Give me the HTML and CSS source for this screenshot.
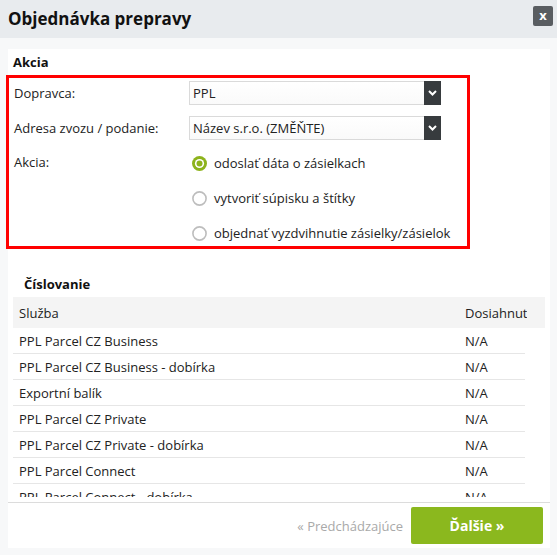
FILE: index.html
```html
<!DOCTYPE html>
<html lang="sk">
<head>
<meta charset="utf-8">
<title>Objednávka prepravy</title>
<link rel="stylesheet" href="styles.css">
</head>
<body>
<div class="dialog">
  <div class="header">
    <div class="title">Objednávka prepravy</div>
    <div class="close">x</div>
  </div>
  <div class="panel">
    <div class="sec-title akcia-title">Akcia</div>
    <div class="redbox">
      <div class="form-row first">
        <div class="label">Dopravca:</div>
        <div class="select"><span class="sel-text">PPL</span><span class="sel-arrow"><svg width="9" height="6" viewBox="0 0 9 6"><polyline points="1,1 4.5,4.5 8,1" fill="none" stroke="#fff" stroke-width="2"/></svg></span></div>
      </div>
      <div class="form-row second">
        <div class="label">Adresa zvozu / podanie:</div>
        <div class="select"><span class="sel-text">Název s.r.o. (ZMĚŇTE)</span><span class="sel-arrow"><svg width="9" height="6" viewBox="0 0 9 6"><polyline points="1,1 4.5,4.5 8,1" fill="none" stroke="#fff" stroke-width="2"/></svg></span></div>
      </div>
      <div class="form-row radios-row">
        <div class="label">Akcia:</div>
        <div class="radios">
          <div class="radio"><svg class="rd" width="15" height="15" viewBox="0 0 15 15"><circle cx="7.5" cy="7.5" r="7.5" fill="#8db31c"/><circle cx="7.5" cy="7.5" r="4.6" fill="#fff"/><circle cx="7.5" cy="7.5" r="3" fill="#8db31c"/></svg><span>odoslať dáta o zásielkach</span></div>
          <div class="radio"><svg class="rd" width="15" height="15" viewBox="0 0 15 15"><circle cx="7.5" cy="7.5" r="6.6" fill="#fff" stroke="#bdbdbd" stroke-width="1.6"/></svg><span>vytvoriť súpisku a štítky</span></div>
          <div class="radio"><svg class="rd" width="15" height="15" viewBox="0 0 15 15"><circle cx="7.5" cy="7.5" r="6.6" fill="#fff" stroke="#bdbdbd" stroke-width="1.6"/></svg><span>objednať vyzdvihnutie zásielky/zásielok</span></div>
        </div>
      </div>
    </div>
    <div class="sec-title cisl-title">Číslovanie</div>
    <div class="thead">
      <div class="thead-inner">
        <div class="c1">Služba</div>
        <div class="c2">Dosiahnut</div>
      </div>
    </div>
    <div class="tbody">
      <div class="tr"><div class="c1">PPL Parcel CZ Business</div><div class="c2">N/A</div></div>
      <div class="tr"><div class="c1">PPL Parcel CZ Business - dobírka</div><div class="c2">N/A</div></div>
      <div class="tr"><div class="c1">Exportní balík</div><div class="c2">N/A</div></div>
      <div class="tr"><div class="c1">PPL Parcel CZ Private</div><div class="c2">N/A</div></div>
      <div class="tr"><div class="c1">PPL Parcel CZ Private - dobírka</div><div class="c2">N/A</div></div>
      <div class="tr"><div class="c1">PPL Parcel Connect</div><div class="c2">N/A</div></div>
      <div class="tr"><div class="c1">PPL Parcel Connect - dobírka</div><div class="c2">N/A</div></div>
    </div>
    <div class="footer">
      <span class="prev">« Predchádzajúce</span>
      <button class="next">Ďalšie »</button>
    </div>
  </div>
</div>
</body>
</html>
```
FILE: styles.css
```css
html, body {
  margin: 0;
  padding: 0;
}
body {
  width: 557px;
  height: 555px;
  overflow: hidden;
  background: #f7f8f9;
  font-family: "Open Sans", "Liberation Sans", sans-serif;
  font-size: 13px;
  color: #222;
}
.dialog {
  display: flex;
  flex-direction: column;
}
.header {
  height: 38px;
  background: #e8ebee;
  display: flex;
  align-items: center;
  justify-content: space-between;
  padding: 0 4px 0 8px;
}
.title {
  font-size: 17px;
  font-weight: 700;
  color: #111;
  line-height: 24px;
  margin-top: -1px;
}
.close {
  width: 20px;
  height: 20px;
  background: #595d61;
  border-radius: 2px;
  color: #fff;
  font-weight: 700;
  font-size: 13px;
  line-height: 18px;
  text-align: center;
  margin-top: -6px;
}
.panel {
  margin: 11px 7px 0 8px;
  height: 499px;
  background: #fff;
  display: flex;
  flex-direction: column;
}
.sec-title {
  font-weight: 700;
  font-size: 13px;
  line-height: 18px;
  color: #111;
  height: 18px;
}
.akcia-title {
  margin-top: 4px;
  padding-left: 5px;
}
.redbox {
  margin-top: 4px;
  margin-left: -2px;
  width: 458px;
  height: 168px;
  border: 3px solid #ff0000;
  padding: 0;
}
.form-row {
  display: flex;
  align-items: center;
}
.form-row.first {
  margin-top: 3px;
}
.form-row.second {
  margin-top: 11px;
}
.label {
  width: 175px;
  padding-left: 5px;
  flex: none;
  line-height: 18px;
}
.select {
  width: 250px;
  height: 22px;
  border: 1px solid #dadada;
  background: linear-gradient(#fff, #fafafa);
  display: flex;
  align-items: center;
  justify-content: space-between;
}
.sel-text {
  padding-left: 3px;
  line-height: 18px;
}
.sel-arrow {
  width: 17px;
  height: 24px;
  margin: -1px -1px -1px 0;
  background: #373b3e;
  display: flex;
  align-items: center;
  justify-content: center;
}
.radios-row {
  align-items: flex-start;
  margin-top: 13px;
}
.radios {
  display: flex;
  flex-direction: column;
  gap: 15px;
}
.radio {
  display: flex;
  align-items: center;
  height: 20px;
  padding-left: 3px;
}
.rd {
  flex: none;
  margin-right: 7px;
}
.cisl-title {
  margin-top: 26px;
  padding-left: 16px;
}
.thead {
  margin-top: 4px;
  margin-left: 5px;
  width: 532px;
  height: 31px;
  background: #f4f4f4;
}
.thead-inner {
  width: 514px;
  height: 31px;
  overflow: hidden;
  display: flex;
  align-items: center;
  white-space: nowrap;
}
.c1 {
  width: 440px;
  padding-left: 6px;
  flex: none;
}
.c2 {
  flex: none;
  padding-left: 6px;
}
.tbody {
  margin-left: 5px;
  width: 514px;
  height: 169px;
  overflow: hidden;
}
.tr {
  width: 512px;
  height: 25px;
  border-bottom: 1px solid #e6e6e6;
  display: flex;
  align-items: center;
}
.footer {
  margin-top: 5px;
  border-top: 1px solid #dcdcdc;
  height: 45px;
  display: flex;
  align-items: center;
  justify-content: flex-end;
  padding-right: 7px;
}
.prev {
  color: #a9a9a9;
  margin-right: 8px;
  font-size: 13px;
}
.next {
  width: 132px;
  height: 37px;
  background: #8bb81e;
  border: none;
  border-radius: 2px;
  color: #fff;
  font-family: "Open Sans", "Liberation Sans", sans-serif;
  font-weight: 700;
  font-size: 14px;
  padding: 0;
}
```
